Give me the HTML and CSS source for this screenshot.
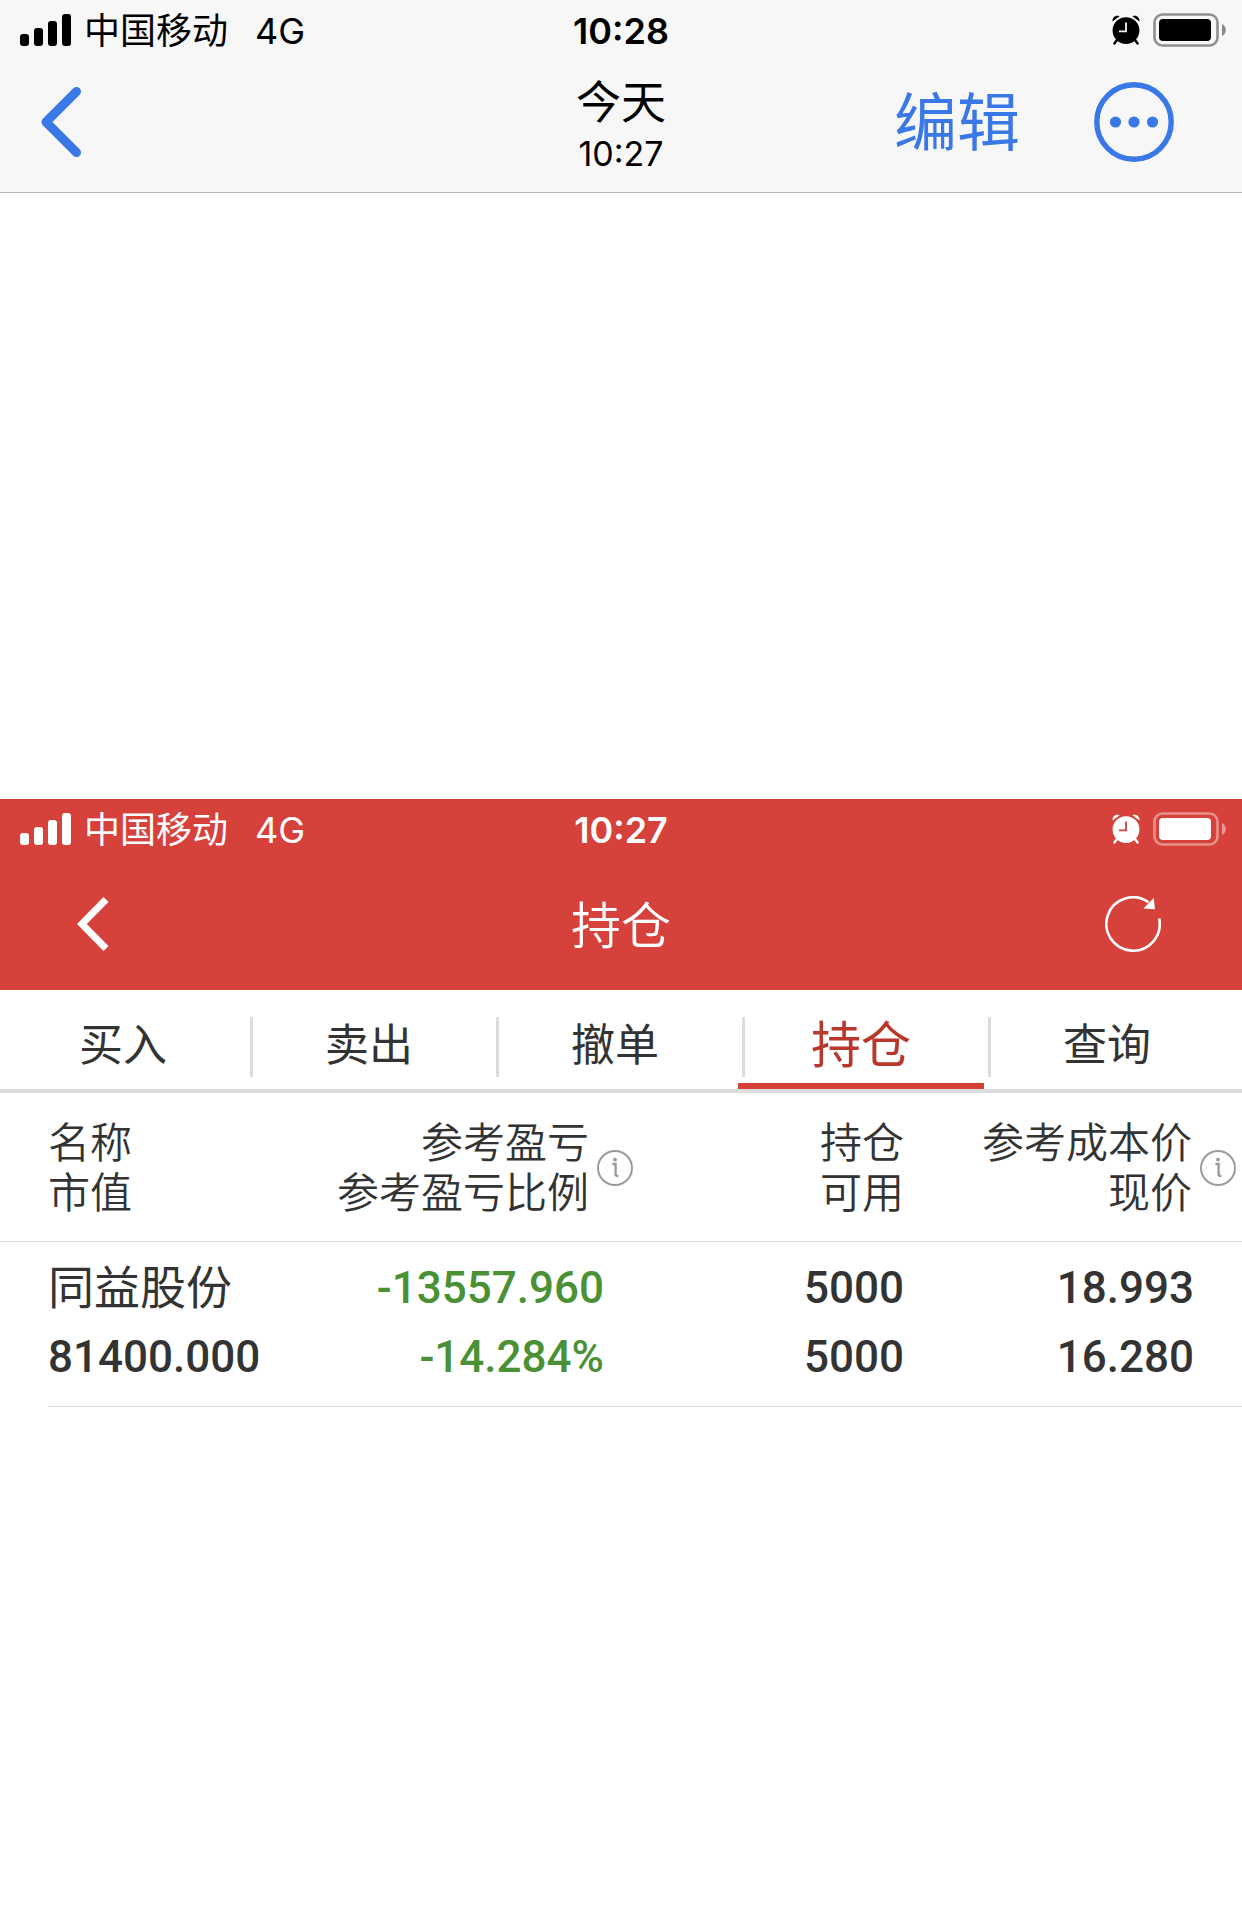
FILE: index.html
```html
<!DOCTYPE html>
<html lang="zh-CN">
<head>
    <meta charset="UTF-8">
    <meta name="viewport" content="width=device-width, initial-scale=1.0">
    <title>持仓</title>
    <link rel="stylesheet" href="styles.css">
</head>
<body>
    <svg class="sprite" width="0" height="0" aria-hidden="true">
        <symbol id="signal" viewBox="0 0 51 32">
            <rect x="0" y="20" width="9" height="12" rx="3"/>
            <rect x="14" y="14" width="9" height="18" rx="3"/>
            <rect x="28" y="7" width="9" height="25" rx="3"/>
            <rect x="42" y="0" width="9" height="32" rx="3"/>
        </symbol>
        <symbol id="alarm" viewBox="0 0 28 30">
            <path d="M0.6 6.4C0 2.6 3.4-0.6 7.6 1.2ZM27.4 6.4C28 2.6 24.6-0.6 20.4 1.2Z"/>
            <path d="M5 25L2.4 28.4M23 25L25.6 28.4" stroke="currentColor" stroke-width="2.4" stroke-linecap="round"/>
            <circle cx="14" cy="15.6" r="13.4"/>
            <path class="hands" d="M14 7.6V16.4H7" fill="none" stroke-width="1.8"/>
        </symbol>
        <symbol id="battery" viewBox="0 0 73 34">
            <rect x="1.5" y="1.5" width="63" height="31" rx="8" fill="none" stroke="currentColor" stroke-width="2.6" opacity="0.42"/>
            <rect x="6" y="6" width="52" height="22" rx="4"/>
            <path d="M69 11C74 13 74 21 69 23Z" opacity="0.45"/>
        </symbol>
        <symbol id="info" viewBox="0 0 36 36">
            <circle cx="18" cy="18" r="17" fill="none" stroke="#9b9b9b" stroke-width="2"/>
            <circle cx="18" cy="9.6" r="1.9" fill="#9b9b9b"/>
            <path d="M15.4 14H18.6V24.6Q18.6 26 21.4 26" fill="none" stroke="#9b9b9b" stroke-width="2.4"/>
        </symbol>
    </svg>

    <header class="viewer-header">
        <div class="status">
            <div class="carrier">
                <svg class="signal"><use href="#signal"/></svg>
                <span>中国移动</span>
                <span class="network">4G</span>
            </div>
            <div class="clock">10:28</div>
            <div class="power">
                <svg class="alarm"><use href="#alarm"/></svg>
                <svg class="battery"><use href="#battery"/></svg>
            </div>
        </div>
        <div class="viewer-nav">
            <button class="icon-button" aria-label="返回">
                <svg width="42" height="72" viewBox="0 0 42 72"><path d="M36.500 5.500L6 36L36.500 66.500" fill="none" stroke="currentColor" stroke-width="9" stroke-linecap="round" stroke-linejoin="round"/></svg>
            </button>
            <div class="viewer-title">
                <div class="day">今天</div>
                <div class="time">10:27</div>
            </div>
            <div class="actions">
                <button class="edit">编辑</button>
                <button class="icon-button" aria-label="更多">
                    <svg width="80" height="80" viewBox="0 0 80 80" fill="currentColor">
                        <circle cx="40" cy="40" r="37.200" fill="none" stroke="currentColor" stroke-width="5.400"/>
                        <circle cx="21.500" cy="40" r="5.600"/>
                        <circle cx="40" cy="40" r="5.600"/>
                        <circle cx="58.500" cy="40" r="5.600"/>
                    </svg>
                </button>
            </div>
        </div>
    </header>

    <main class="screen">
        <header class="app-header">
            <div class="status">
                <div class="carrier">
                    <svg class="signal"><use href="#signal"/></svg>
                    <span>中国移动</span>
                    <span class="network">4G</span>
                </div>
                <div class="clock">10:27</div>
                <div class="power">
                    <svg class="alarm"><use href="#alarm"/></svg>
                    <svg class="battery"><use href="#battery"/></svg>
                </div>
            </div>
            <div class="app-nav">
                <button class="icon-button" aria-label="返回">
                    <svg width="32" height="54" viewBox="0 0 32 54"><path d="M29 2.500L4.800 27L29 51.500" fill="none" stroke="currentColor" stroke-width="7"/></svg>
                </button>
                <h1>持仓</h1>
                <button class="icon-button refresh" aria-label="刷新">
                    <svg width="56" height="56" viewBox="0 0 56 56">
                        <path d="M54.200 22.600A26.700 26.700 0 1 1 43.500 6.200" fill="none" stroke="currentColor" stroke-width="2.600"/>
                        <path d="M48.700 2L50 13.200L38.400 12.600Z" fill="currentColor"/>
                    </svg>
                </button>
            </div>
        </header>

        <nav class="tabs">
            <a class="tab" href="#">买入</a>
            <a class="tab" href="#">卖出</a>
            <a class="tab" href="#">撤单</a>
            <a class="tab active" href="#">持仓</a>
            <a class="tab" href="#">查询</a>
        </nav>

        <table class="holdings">
            <colgroup>
                <col class="col-name">
                <col class="col-profit">
                <col class="col-amount">
                <col class="col-price">
            </colgroup>
            <thead>
                <tr>
                    <th class="name">名称<br>市值</th>
                    <th>
                        <div class="with-info">
                            <span>参考盈亏<br>参考盈亏比例</span>
                            <button class="icon-button" aria-label="盈亏说明"><svg class="info"><use href="#info"/></svg></button>
                        </div>
                    </th>
                    <th>持仓<br>可用</th>
                    <th class="price">
                        <div class="with-info">
                            <span>参考成本价<br>现价</span>
                            <button class="icon-button" aria-label="成本价说明"><svg class="info"><use href="#info"/></svg></button>
                        </div>
                    </th>
                </tr>
            </thead>
            <tbody>
                <tr>
                    <td><div class="cell name"><span class="stock">同益股份</span><span>81400.000</span></div></td>
                    <td><div class="cell profit"><span>-13557.960</span><span>-14.284%</span></div></td>
                    <td><div class="cell"><span>5000</span><span>5000</span></div></td>
                    <td><div class="cell price"><span>18.993</span><span>16.280</span></div></td>
                </tr>
            </tbody>
        </table>
    </main>
</body>
</html>
```

FILE: styles.css
```css
* {
    box-sizing: border-box;
}

body {
    margin: 0;
    background: #fff;
    color: #333;
    font-family: Inter, "Noto Sans CJK SC", sans-serif;
}

button {
    margin: 0;
    padding: 0;
    border: 0;
    background: none;
    color: inherit;
    font: inherit;
    cursor: pointer;
}

svg {
    display: block;
}

.sprite {
    position: absolute;
}

.icon-button {
    display: flex;
}

/* status bar */
.status {
    display: grid;
    grid-template-columns: 1fr auto 1fr;
    align-items: center;
    height: 60px;
    padding: 0 16px;
    fill: currentColor;
    line-height: 40px;
}

.carrier {
    display: flex;
    align-items: center;
    gap: 13px;
    padding-left: 4px;
    font-size: 36px;
}

.carrier span,
.clock {
    padding-top: 2px;
}

.network {
    margin-left: 14px;
}

.clock {
    font-size: 36px;
    font-weight: 600;
}

.power {
    display: flex;
    align-items: center;
    justify-content: flex-end;
    gap: 13px;
}

.signal {
    width: 51px;
    height: 32px;
}

.alarm {
    width: 28px;
    height: 30px;
}

.battery {
    width: 73px;
    height: 34px;
}

.hands {
    stroke: var(--bar);
}

/* photo viewer header */
.viewer-header {
    --bar: #f7f7f7;
    background: var(--bar);
    border-bottom: 1px solid #b2b2b2;
    color: #000;
}

.viewer-nav {
    display: grid;
    grid-template-columns: 1fr auto 1fr;
    align-items: center;
    height: 132px;
    padding: 0 40px 8px;
    color: #3b78e7;
}

.viewer-title {
    padding-top: 8px;
    color: #000;
    text-align: center;
}

.day {
    font-size: 45px;
    line-height: 56px;
}

.time {
    font-size: 34px;
    line-height: 46px;
}

.actions {
    display: flex;
    align-items: center;
    justify-content: flex-end;
    gap: 74px;
    padding-right: 28px;
}

.edit {
    font-size: 63px;
    line-height: 80px;
}

/* trading app */
.screen {
    padding-top: 606px;
}

.app-header {
    --bar: #d6423b;
    background: var(--bar);
    color: #fff;
}

.app-nav {
    display: grid;
    grid-template-columns: 1fr auto 1fr;
    align-items: center;
    height: 131px;
    padding: 0 77px 2px;
}

.app-nav h1 {
    margin: 0;
    padding-top: 4px;
    font-size: 50px;
    font-weight: 350;
    line-height: 60px;
}

.refresh {
    justify-self: end;
    padding-right: 4px;
}

.tabs {
    display: flex;
    padding-right: 12px;
    border-bottom: 4px solid #dcdcdc;
}

.tab {
    flex: 1;
    height: 99px;
    padding-top: 13px;
    border-bottom: 6px solid transparent;
    color: #333;
    font-size: 44px;
    line-height: 84px;
    text-align: center;
    text-decoration: none;
}

.tab + .tab {
    background: linear-gradient(#dcdcdc, #dcdcdc) 4px 27px / 3px 60px no-repeat;
}

.tab.active {
    border-bottom-color: #d64034;
    color: #b8382c;
    font-size: 50px;
}

.holdings {
    width: 100%;
    border-collapse: collapse;
    table-layout: fixed;
    text-align: right;
}

.col-profit {
    width: 318px;
}

.col-amount {
    width: 271px;
}

.col-price {
    width: 338px;
}

.holdings th {
    padding: 25px 0 23px;
    border-bottom: 1px solid #dadada;
    font-size: 42px;
    font-weight: 350;
    line-height: 50px;
    text-align: right;
}

.holdings th.name {
    padding-left: 48px;
    text-align: left;
}

.holdings th.price {
    padding-right: 6px;
}

.with-info {
    display: flex;
    align-items: center;
    justify-content: flex-end;
    gap: 8px;
}

.info {
    width: 36px;
    height: 36px;
}

.holdings td {
    padding: 0;
}

.cell {
    display: flex;
    flex-direction: column;
    padding: 12px 0 14px;
    border-bottom: 1px solid #dadada;
    font-family: Roboto, "Noto Sans CJK SC", sans-serif;
    font-size: 44px;
    font-weight: 500;
    line-height: 69px;
}

.cell.name {
    margin-left: 48px;
    text-align: left;
}

.cell.profit {
    padding-right: 29px;
    color: #4a9136;
}

.cell.price {
    padding-right: 48px;
}

.stock {
    font-size: 46px;
    font-weight: 400;
}
```
